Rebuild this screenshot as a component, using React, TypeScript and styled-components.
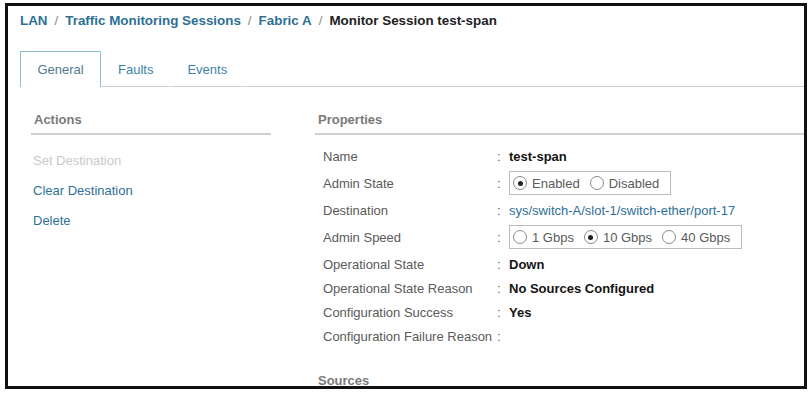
import React from 'react';
import styled, { createGlobalStyle } from 'styled-components';

const colors = {
  frame: '#111111',
  link: '#2f7097',
  label: '#5a5a5a',
  value: '#141414',
  header: '#7a7a7a',
  rule: '#cfcfcf',
  tabBorder: '#8fbdd1',
  disabled: '#c9c9c9',
  sep: '#8a8a8a',
};

const GlobalStyle = createGlobalStyle`
  html, body {
    margin: 0;
    padding: 0;
    background: #ffffff;
  }
  body {
    font-family: 'Liberation Sans', Arial, sans-serif;
  }
`;

type RadioOption = { label: string; checked?: boolean };

type Property = {
  name: string;
  value?: string;
  kind?: 'bold' | 'link' | 'radio' | 'empty';
  options?: RadioOption[];
};

const properties: Property[] = [
  { name: 'Name', value: 'test-span', kind: 'bold' },
  {
    name: 'Admin State',
    kind: 'radio',
    options: [{ label: 'Enabled', checked: true }, { label: 'Disabled' }],
  },
  { name: 'Destination', value: 'sys/switch-A/slot-1/switch-ether/port-17', kind: 'link' },
  {
    name: 'Admin Speed',
    kind: 'radio',
    options: [{ label: '1 Gbps' }, { label: '10 Gbps', checked: true }, { label: '40 Gbps' }],
  },
  { name: 'Operational State', value: 'Down', kind: 'bold' },
  { name: 'Operational State Reason', value: 'No Sources Configured', kind: 'bold' },
  { name: 'Configuration Success', value: 'Yes', kind: 'bold' },
  { name: 'Configuration Failure Reason', kind: 'empty' },
];

const actions = [
  { label: 'Set Destination', disabled: true },
  { label: 'Clear Destination' },
  { label: 'Delete' },
];

const App = () => {
  return (
    <>
      <GlobalStyle />
      <Page>
        <Frame>
          <Breadcrumb>
            <Crumb>LAN</Crumb>
            <Sep>/</Sep>
            <Crumb>Traffic Monitoring Sessions</Crumb>
            <Sep>/</Sep>
            <Crumb>Fabric A</Crumb>
            <Sep>/</Sep>
            <Current>Monitor Session test-span</Current>
          </Breadcrumb>

          <TabBar>
            <Tab $active>General</Tab>
            <Tab>Faults</Tab>
            <Tab>Events</Tab>
            <TabFill />
          </TabBar>

          <Body>
            <ActionsColumn>
              <SectionHeader>Actions</SectionHeader>
              <ActionList>
                {actions.map((a) => (
                  <ActionItem key={a.label} $disabled={a.disabled}>
                    {a.label}
                  </ActionItem>
                ))}
              </ActionList>
            </ActionsColumn>

            <PropertiesColumn>
              <SectionHeader>Properties</SectionHeader>
              <PropList>
                {properties.map((p) => (
                  <PropRow key={p.name} $tall={p.kind === 'radio'}>
                    <PropLabel>{p.name}</PropLabel>
                    <Colon>:</Colon>
                    {p.kind === 'radio' && p.options ? (
                      <RadioGroup>
                        {p.options.map((o) => (
                          <RadioOpt key={o.label}>
                            <RadioDot $checked={o.checked} />
                            {o.label}
                          </RadioOpt>
                        ))}
                      </RadioGroup>
                    ) : p.kind === 'link' ? (
                      <LinkValue>{p.value}</LinkValue>
                    ) : p.kind === 'bold' ? (
                      <BoldValue>{p.value}</BoldValue>
                    ) : null}
                  </PropRow>
                ))}
              </PropList>
              <SourcesHeader>Sources</SourcesHeader>
            </PropertiesColumn>
          </Body>
        </Frame>
      </Page>
    </>
  );
};
export default App;

const Page = styled.div`
  width: 812px;
  height: 393px;
  padding: 3px 0 0 5px;
  box-sizing: border-box;
  background: #ffffff;
`;

const Frame = styled.div`
  width: 802px;
  height: 386px;
  box-sizing: border-box;
  border: 3px solid ${colors.frame};
  overflow: hidden;
  background: #ffffff;
`;

const Breadcrumb = styled.div`
  display: flex;
  align-items: center;
  height: 24px;
  padding: 2px 0 0 12px;
  font-size: 13.4px;
  font-weight: 700;
  white-space: nowrap;
`;

const Crumb = styled.span`
  color: ${colors.link};
`;

const Sep = styled.span`
  color: ${colors.sep};
  font-weight: 400;
  margin: 0 7px;
`;

const Current = styled.span`
  color: #222222;
`;

const TabBar = styled.div`
  display: flex;
  align-items: stretch;
  height: 36px;
  margin: 19px 0 0 12px;
`;

const Tab = styled.div<{ $active?: boolean }>`
  display: flex;
  align-items: center;
  padding: 0 ${(p) => (p.$active ? '17px' : '16px')};
  font-size: 13px;
  color: ${(p) => (p.$active ? '#52788f' : '#3c82a8')};
  border: 1px solid ${(p) => (p.$active ? colors.tabBorder : 'transparent')};
  border-bottom: ${(p) => (p.$active ? 'none' : `1px solid ${colors.rule}`)};
  border-radius: 1px 1px 0 0;
  box-sizing: border-box;
  width: ${(p) => (p.$active ? '81px' : 'auto')};
  justify-content: ${(p) => (p.$active ? 'center' : 'flex-start')};
`;

const TabFill = styled.div`
  flex: 1;
  border-bottom: 1px solid ${colors.rule};
`;

const Body = styled.div`
  display: grid;
  grid-template-columns: 240px 1fr;
  column-gap: 44px;
  padding: 20px 0 0 23px;
`;

const ActionsColumn = styled.div`
  display: flex;
  flex-direction: column;
`;

const PropertiesColumn = styled.div`
  display: flex;
  flex-direction: column;
`;

const SectionHeader = styled.div`
  height: 26px;
  line-height: 26px;
  padding-left: 3px;
  font-size: 13px;
  font-weight: 700;
  color: ${colors.header};
  border-bottom: 2px solid ${colors.rule};
`;

const ActionList = styled.div`
  display: flex;
  flex-direction: column;
  padding: 11px 0 0 2px;
`;

const ActionItem = styled.div<{ $disabled?: boolean }>`
  height: 30px;
  line-height: 30px;
  font-size: 13px;
  color: ${(p) => (p.$disabled ? colors.disabled : colors.link)};
`;

const PropList = styled.div`
  display: flex;
  flex-direction: column;
  padding: 9px 0 0 8px;
`;

const PropRow = styled.div<{ $tall?: boolean }>`
  display: flex;
  align-items: center;
  height: ${(p) => (p.$tall ? '30px' : '24px')};
  font-size: 13px;
`;

const PropLabel = styled.div`
  width: 174px;
  color: ${colors.label};
  white-space: nowrap;
`;

const Colon = styled.div`
  width: 12px;
  color: ${colors.label};
`;

const BoldValue = styled.div`
  font-weight: 700;
  color: ${colors.value};
`;

const LinkValue = styled.div`
  color: ${colors.link};
`;

const RadioGroup = styled.div`
  display: flex;
  align-items: center;
  gap: 10px;
  height: 22px;
  padding: 0 11px 0 3px;
  border: 1px solid #bcbcbc;
`;

const RadioOpt = styled.div`
  display: flex;
  align-items: center;
  gap: 5px;
  color: ${colors.label};
`;

const RadioDot = styled.span<{ $checked?: boolean }>`
  position: relative;
  width: 14px;
  height: 14px;
  border-radius: 50%;
  border: 1px solid #8a8a8a;
  box-sizing: border-box;
  &::after {
    content: '';
    display: ${(p) => (p.$checked ? 'block' : 'none')};
    position: absolute;
    left: 3.5px;
    top: 3.5px;
    width: 5px;
    height: 5px;
    border-radius: 50%;
    background: #222;
  }
`;

const SourcesHeader = styled.div`
  margin-top: 25px;
  padding-left: 3px;
  font-size: 13px;
  font-weight: 700;
  color: ${colors.header};
`;
